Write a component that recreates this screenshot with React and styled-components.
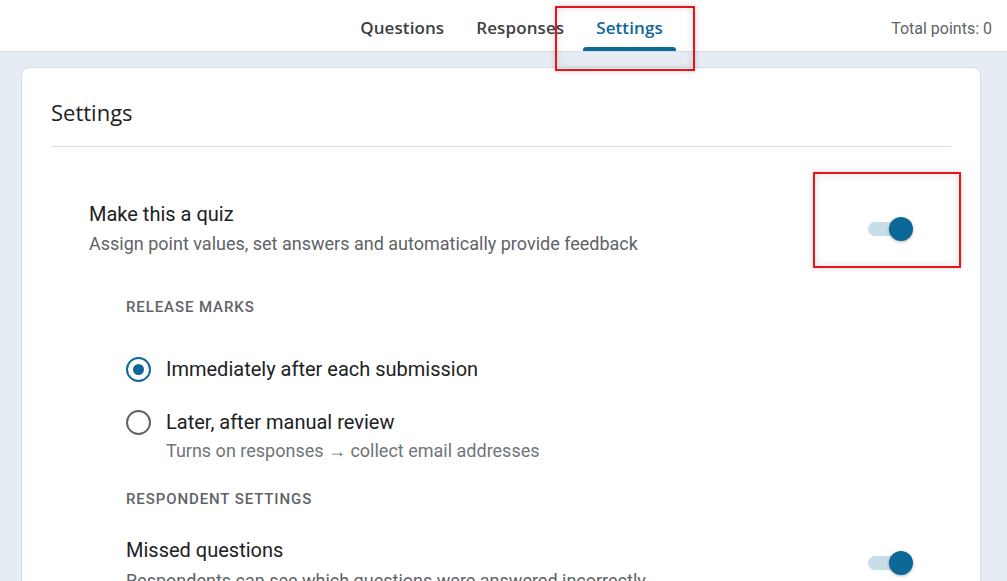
import React from "react";
import styled, { createGlobalStyle } from "styled-components";

const GlobalStyle = createGlobalStyle`
  html, body {
    margin: 0;
    padding: 0;
    background: #e6ecf3;
    font-family: Roboto, "Liberation Sans", Arial, sans-serif;
    overflow: hidden;
  }
`;

const BLUE = "#0c6897";

export default function App() {
  return (
    <Page>
      <GlobalStyle />
      <TopBar>
        <Tabs>
          <Tab>Questions</Tab>
          <Tab>Responses</Tab>
          <Tab active>Settings</Tab>
        </Tabs>
        <Total>Total points: 0</Total>
      </TopBar>

      <Main>
        <Card>
          <CardTitle>Settings</CardTitle>
          <Divider />

          <Section>
            <Row>
              <RowText>
                <RowTitle>Make this a quiz</RowTitle>
                <RowDesc>
                  Assign point values, set answers and automatically provide
                  feedback
                </RowDesc>
              </RowText>
              <Toggle on />
            </Row>

            <Sub>
              <Label>Release marks</Label>
              <Radios>
                <RadioRow>
                  <Radio checked />
                  <div>
                    <RadioLabel>Immediately after each submission</RadioLabel>
                  </div>
                </RadioRow>
                <RadioRow>
                  <Radio />
                  <div>
                    <RadioLabel>Later, after manual review</RadioLabel>
                    <RadioHint>
                      Turns on responses → collect email addresses
                    </RadioHint>
                  </div>
                </RadioRow>
              </Radios>

              <Label>Respondent settings</Label>
              <SubRow>
                <RowText>
                  <SubTitle>Missed questions</SubTitle>
                  <RowDesc>
                    Respondents can see which questions were answered
                    incorrectly
                  </RowDesc>
                </RowText>
                <Toggle on />
              </SubRow>
            </Sub>
          </Section>
        </Card>
      </Main>

      <Highlight style={{ left: 555, top: 6, width: 140, height: 65 }} />
      <Highlight style={{ left: 813, top: 172, width: 148, height: 96 }} />
    </Page>
  );
}

function Toggle({ on }) {
  return (
    <Switch>
      <Track on={on} />
      <Thumb on={on} />
    </Switch>
  );
}

function Radio({ checked }) {
  return <RadioRing checked={checked}>{checked && <RadioDot />}</RadioRing>;
}

const Page = styled.div`
  position: relative;
  width: 1007px;
  height: 581px;
  overflow: hidden;
`;

const TopBar = styled.header`
  height: 51px;
  background: #fff;
  border-bottom: 1px solid #dadce0;
  display: flex;
  align-items: stretch;
  justify-content: center;
  position: relative;
  padding-left: 16px;
  box-sizing: content-box;
`;

const Tabs = styled.nav`
  display: flex;
  gap: 6px;
`;

const Tab = styled.div`
  position: relative;
  display: flex;
  align-items: center;
  padding: 4px 13px 0;
  font-family: "Open Sans", Roboto, sans-serif;
  font-size: 17px;
  font-weight: 600;
  letter-spacing: 0.1px;
  color: ${(p) => (p.active ? BLUE : "#3c4043")};

  &::after {
    content: "";
    display: ${(p) => (p.active ? "block" : "none")};
    position: absolute;
    left: 0;
    right: 0;
    bottom: 0;
    height: 4px;
    border-radius: 3px 3px 0 0;
    background: ${BLUE};
  }
`;

const Total = styled.div`
  position: absolute;
  right: 15px;
  top: 5px;
  bottom: 0;
  display: flex;
  align-items: center;
  font-size: 16px;
  color: #5f6368;
`;

const Main = styled.main`
  padding: 15px 26px 0 21px;
`;

const Card = styled.section`
  background: #fff;
  border: 1px solid #dadce0;
  border-radius: 8px;
  padding: 29px 29px 0;
  height: 560px;
`;

const CardTitle = styled.h1`
  margin: 0;
  font-family: "Open Sans", Roboto, sans-serif;
  font-size: 22px;
  line-height: 30px;
  font-weight: 400;
  color: #202124;
`;

const Divider = styled.hr`
  border: 0;
  border-top: 1px solid #dadce0;
  margin: 19px 0 0;
`;

const Section = styled.div`
  padding: 55px 38px 0;
`;

const Row = styled.div`
  display: flex;
  align-items: center;
  justify-content: space-between;
`;

const RowText = styled.div`
  display: flex;
  flex-direction: column;
`;

const RowTitle = styled.div`
  font-size: 20px;
  line-height: 24px;
  color: #202124;
`;

const RowDesc = styled.div`
  margin-top: 6px;
  font-size: 18px;
  line-height: 24px;
  color: #5f6368;
  white-space: nowrap;
`;

const Sub = styled.div`
  padding: 41px 0 0 37px;
`;

const Label = styled.div`
  font-size: 15px;
  font-weight: 500;
  letter-spacing: 0.9px;
  text-transform: uppercase;
  color: #5f6368;
  line-height: 20px;
`;

const Radios = styled.div`
  display: flex;
  flex-direction: column;
  gap: 28px;
  padding: 40px 0 27px;
`;

const RadioRow = styled.div`
  display: flex;
  align-items: flex-start;
  gap: 15px;
`;

const RadioRing = styled.div`
  width: 21px;
  height: 21px;
  border-radius: 50%;
  border: 2px solid ${(p) => (p.checked ? BLUE : "#5f6368")};
  display: flex;
  align-items: center;
  justify-content: center;
  flex-shrink: 0;
`;

const RadioDot = styled.div`
  width: 11px;
  height: 11px;
  border-radius: 50%;
  background: ${BLUE};
`;

const RadioLabel = styled.div`
  font-size: 20px;
  line-height: 25px;
  color: #202124;
`;

const RadioHint = styled.div`
  margin-top: 5px;
  font-size: 18px;
  line-height: 22px;
  color: #70757a;
`;

const SubRow = styled.div`
  display: flex;
  align-items: center;
  justify-content: space-between;
  padding-top: 28px;

  & > :last-child {
    margin-top: -4px;
  }
`;

const SubTitle = styled.div`
  font-size: 20px;
  line-height: 26px;
  color: #202124;
`;

const Switch = styled.div`
  position: relative;
  width: 45px;
  height: 24px;
  flex-shrink: 0;
`;

const Track = styled.div`
  position: absolute;
  left: 0;
  right: 6px;
  top: 5px;
  height: 14px;
  border-radius: 7px;
  background: ${(p) => (p.on ? "#c9dde9" : "#bdc1c6")};
`;

const Thumb = styled.div`
  position: absolute;
  top: 0;
  ${(p) => (p.on ? "right: 0;" : "left: 0;")}
  width: 24px;
  height: 24px;
  border-radius: 50%;
  background: ${(p) => (p.on ? BLUE : "#fff")};
  box-shadow: 0 1px 3px rgba(0, 0, 0, 0.3);
`;

const Highlight = styled.div`
  position: absolute;
  box-sizing: border-box;
  border: 2px solid #e8141c;
  box-shadow: 0 0 6px rgba(0, 0, 0, 0.18), inset 0 0 8px rgba(0, 0, 0, 0.12);
  pointer-events: none;
`;
